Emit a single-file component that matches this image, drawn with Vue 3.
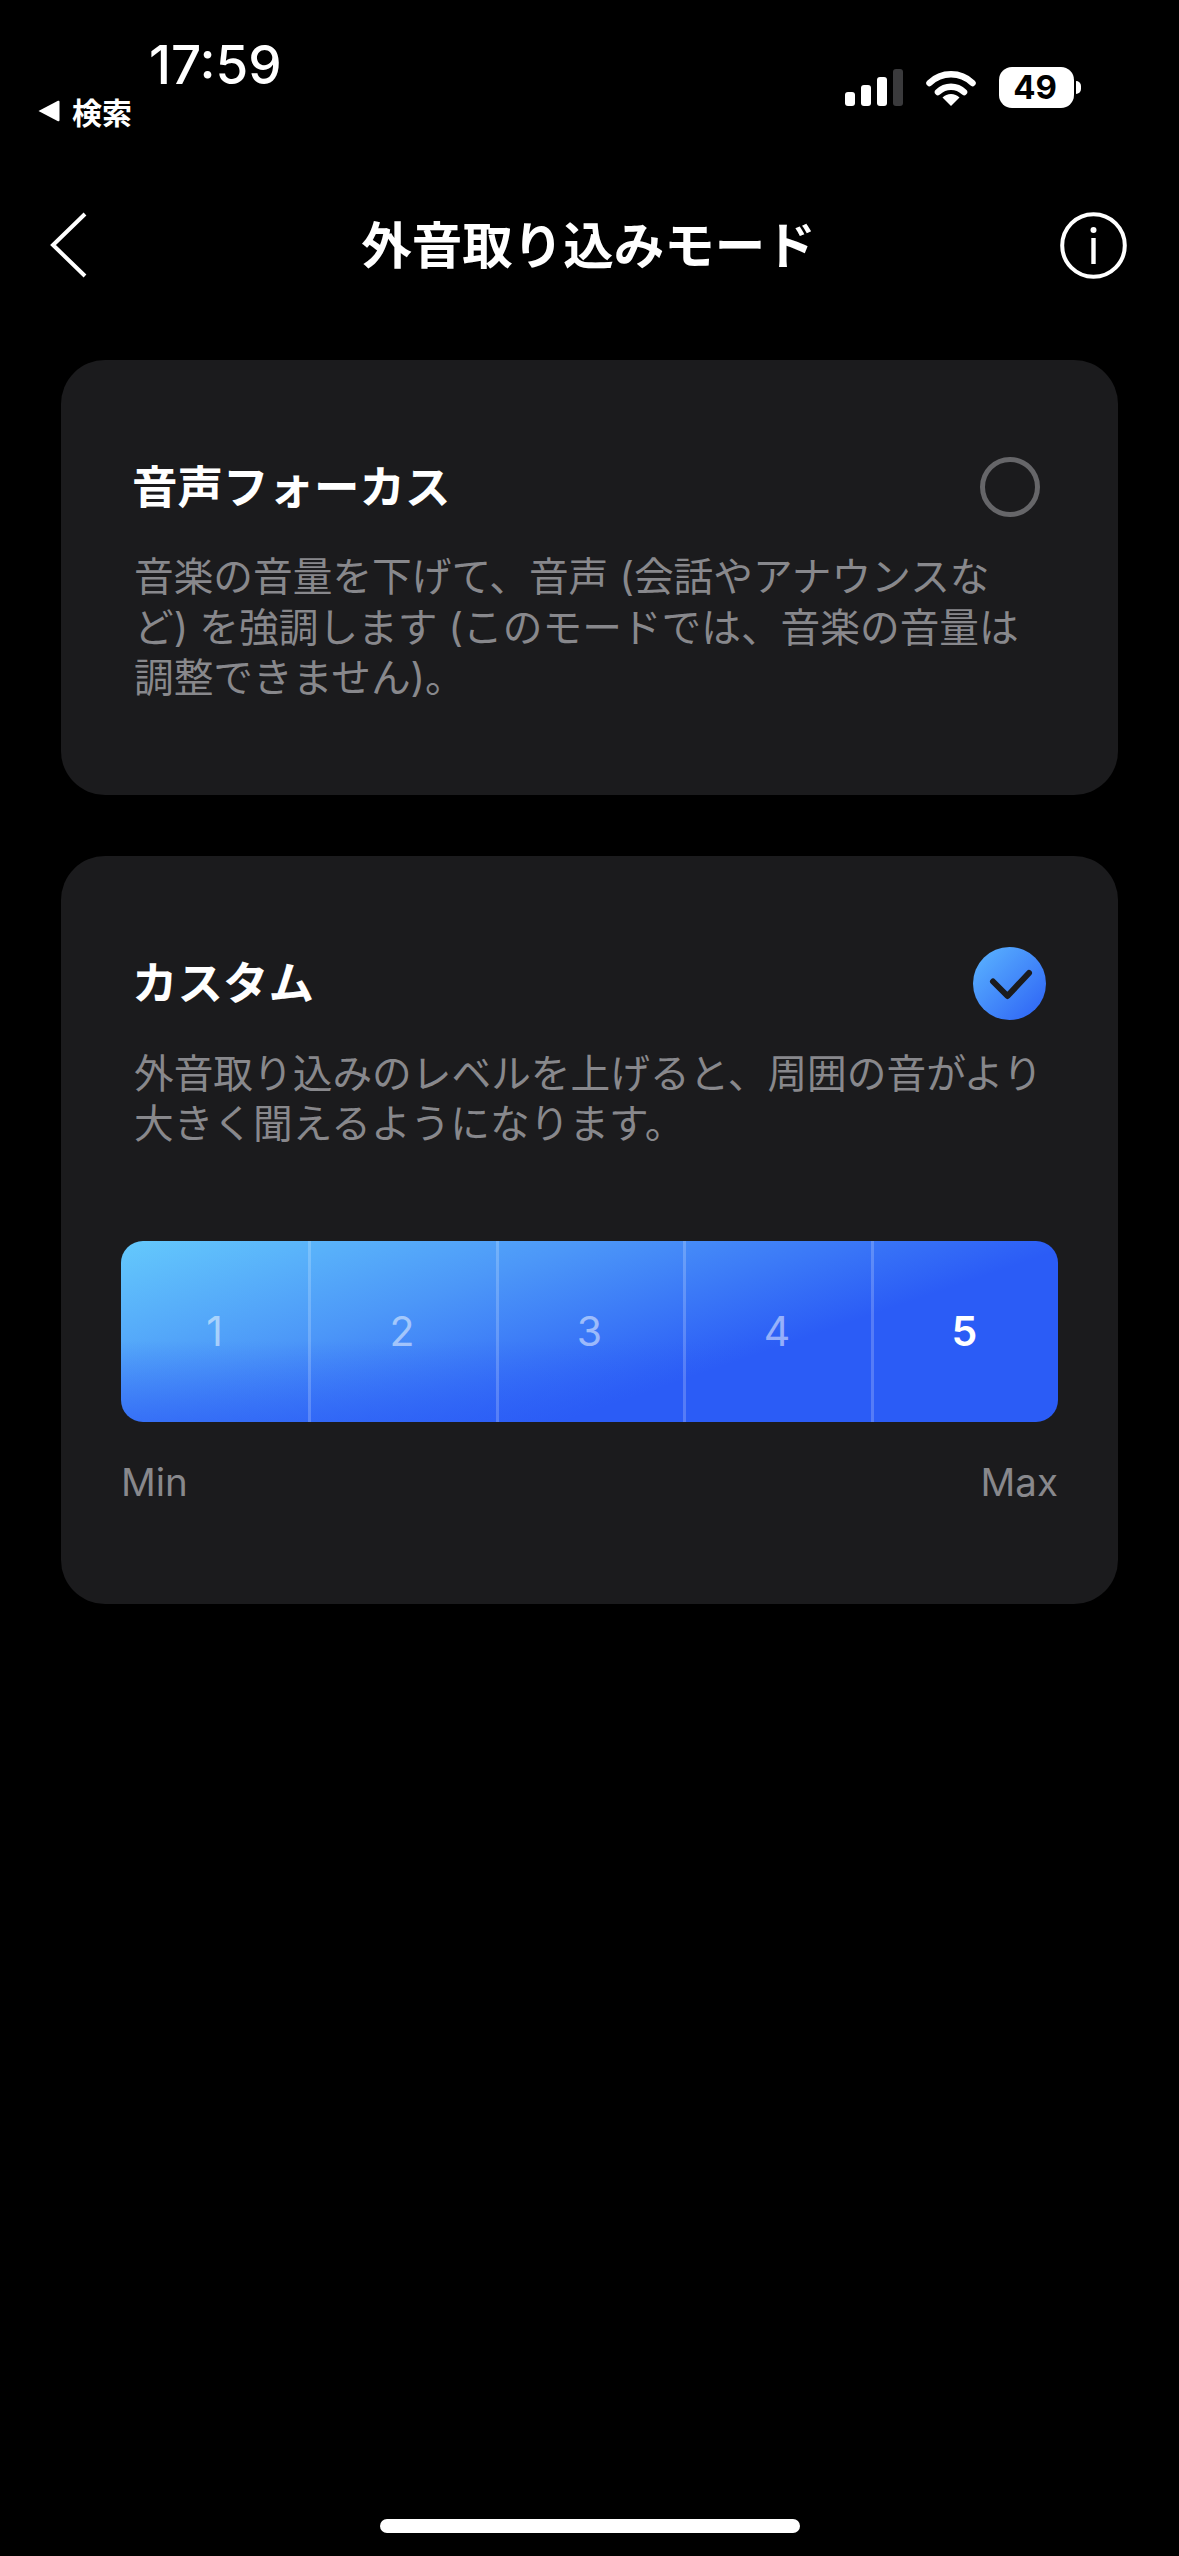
<script setup>
const levels = [1, 2, 3, 4, 5]
const activeLevel = 5
const bars = [
  { h: 14, on: true },
  { h: 21, on: true },
  { h: 29, on: true },
  { h: 37, on: false }
]
</script>

<template>
  <div class="page">
    <div class="status">
      <div class="status-left">
        <div class="time">17:59</div>
        <div class="back-app">
          <svg class="back-arrow" width="22" height="22" viewBox="0 0 22 22">
            <path d="M0.5 11 L20 0.8 Q21.5 0.2 21.5 2 L21.5 20 Q21.5 21.8 20 21.2 Z" fill="#fff" />
          </svg>
          <span>検索</span>
        </div>
      </div>
      <div class="status-right">
        <div class="signal">
          <span v-for="(b, i) in bars" :key="i" class="bar" :class="{ off: !b.on }" :style="{ height: b.h + 'px' }"></span>
        </div>
        <svg width="50" height="37" viewBox="0 0 50 37">
          <path d="M3.5 14 A 31 31 0 0 1 46.5 14" fill="none" stroke="#fff" stroke-width="6.5" stroke-linecap="round" />
          <path d="M12 23 A 19 19 0 0 1 38 23" fill="none" stroke="#fff" stroke-width="6.5" stroke-linecap="round" />
          <path d="M25 37 L16.5 28.5 A 12 12 0 0 1 33.5 28.5 Z" fill="#fff" />
        </svg>
        <div class="battery">
          <div class="battery-body">49</div>
          <div class="battery-nub"></div>
        </div>
      </div>
    </div>

    <div class="nav">
      <svg class="nav-back" width="37" height="66" viewBox="0 0 37 66">
        <path d="M35 2 L3 33 L35 64" fill="none" stroke="#fff" stroke-width="4" />
      </svg>
      <div class="nav-title">外音取り込みモード</div>
      <svg class="nav-info" width="67" height="67" viewBox="0 0 67 67">
        <circle cx="33.5" cy="33.5" r="31.3" fill="none" stroke="#fff" stroke-width="4" />
        <circle cx="33.5" cy="18" r="3" fill="#fff" />
        <rect x="31.3" y="26" width="4.4" height="26" fill="#fff" />
      </svg>
    </div>

    <div class="list">
      <div class="card">
        <div class="row">
          <div class="title">音声フォーカス</div>
          <div class="radio"></div>
        </div>
        <div class="desc first">音楽の音量を下げて、音声 (会話やアナウンスな<br>ど) を強調します (このモードでは、音楽の音量は<br>調整できません)。</div>
      </div>

      <div class="card custom">
        <div class="row row-check">
          <div class="title">カスタム</div>
          <svg class="check" width="73" height="73" viewBox="0 0 73 73">
            <defs>
              <linearGradient id="checkFill" x1="0" y1="0" x2="1" y2="1">
                <stop offset="0" stop-color="#5cb6ff" />
                <stop offset="1" stop-color="#2c60f5" />
              </linearGradient>
            </defs>
            <circle cx="36.5" cy="36.5" r="36.5" fill="url(#checkFill)" />
            <path d="M20 34.5 L34.5 49 L56 26" fill="none" stroke="#1b1b1d" stroke-width="6" stroke-linecap="round" stroke-linejoin="round" />
          </svg>
        </div>
        <div class="desc second">外音取り込みのレベルを上げると、周囲の音がより<br>大きく聞えるようになります。</div>
        <div class="slider">
          <div v-for="n in levels" :key="n" class="cell" :class="{ active: n === activeLevel }">{{ n }}</div>
        </div>
        <div class="range">
          <span>Min</span>
          <span>Max</span>
        </div>
      </div>
    </div>

    <div class="home-wrap">
      <div class="home"></div>
    </div>
  </div>
</template>

<style>
html, body {
  background: #000;
}
</style>

<style scoped>
.page {
  height: 2556px;
  background: #000;
  color: #fff;
  display: flex;
  flex-direction: column;
  font-family: Inter, "Noto Sans CJK JP", sans-serif;
  overflow: hidden;
}
.status {
  height: 195px;
  display: flex;
  justify-content: space-between;
  align-items: flex-start;
}
.status-left {
  padding: 36px 0 0 38px;
}
.time {
  margin-left: 111px;
  font-size: 53px;
  line-height: 58px;
  font-weight: 500;
}
.back-app {
  display: flex;
  align-items: center;
  gap: 12px;
  margin-top: -1px;
  font-size: 30px;
  line-height: 36px;
  font-weight: 700;
  font-family: "Noto Sans CJK JP", sans-serif;
}
.status-right {
  display: flex;
  align-items: center;
  gap: 23px;
  padding: 67px 98px 0 0;
}
.signal {
  display: flex;
  align-items: flex-end;
  gap: 6px;
  height: 37px;
}
.bar {
  width: 10px;
  border-radius: 3px;
  background: #fff;
}
.bar.off {
  background: #3a3a3c;
}
.battery {
  display: flex;
  align-items: center;
  gap: 2px;
}
.battery-body {
  width: 75px;
  height: 41px;
  padding-right: 3px;
  box-sizing: border-box;
  border-radius: 13px;
  background: #fff;
  color: #000;
  font-size: 33px;
  line-height: 41px;
  font-weight: 700;
  text-align: center;
}
.battery-nub {
  width: 5px;
  height: 13px;
  border-radius: 0 5px 5px 0;
  background: #fff;
}
.nav {
  height: 100px;
  display: grid;
  grid-template-columns: 1fr auto 1fr;
  align-items: center;
  padding: 0 52px 0 50px;
}
.nav-title {
  font-size: 50.5px;
  font-weight: 700;
  line-height: 60px;
  margin-top: -7px;
  font-family: "Noto Sans CJK JP", sans-serif;
}
.nav-info {
  justify-self: end;
}
.list {
  padding: 65px 61px 0;
  display: flex;
  flex-direction: column;
  gap: 61px;
}
.card {
  background: #1b1b1d;
  border-radius: 44px;
  padding: 97px 0 91px;
}
.card.custom {
  padding: 91px 60px 0;
  height: 748px;
  box-sizing: border-box;
}
.row {
  display: flex;
  align-items: center;
  justify-content: space-between;
  padding: 0 78px 0 71px;
}
.row-check {
  padding: 0 12px 0 11px;
}
.title {
  font-size: 45.5px;
  font-weight: 700;
  line-height: 60px;
  margin-top: -7px;
  font-family: "Noto Sans CJK JP", sans-serif;
}
.radio {
  width: 60px;
  height: 60px;
  box-sizing: border-box;
  border: 5px solid #666669;
  border-radius: 50%;
}
.desc {
  font-size: 39.7px;
  line-height: 50.5px;
  color: #88888c;
  font-family: Inter, "Noto Sans CJK JP", sans-serif;
  white-space: nowrap;
}
.desc.first {
  margin-top: 35px;
  padding-left: 73px;
}
.desc.second {
  margin-top: 29px;
  padding-left: 13px;
}
.slider {
  margin-top: 91px;
  height: 181px;
  border-radius: 22px;
  overflow: hidden;
  display: grid;
  grid-template-columns: repeat(5, 1fr);
  background:
    linear-gradient(to top, rgba(43, 92, 246, 0.6) 0%, rgba(43, 92, 246, 0) 45%),
    linear-gradient(161deg, #64c9fc 0%, #4c97f8 32%, #2b5cf6 66%, #2b5cf6 100%);
}
.cell {
  display: flex;
  align-items: center;
  justify-content: center;
  font-size: 41px;
  color: rgba(255, 255, 255, 0.5);
  box-shadow: inset 3px 0 0 rgba(255, 255, 255, 0.2);
}
.cell:first-child {
  box-shadow: none;
}
.cell.active {
  color: #fff;
  font-weight: 600;
}
.range {
  display: flex;
  justify-content: space-between;
  margin-top: 36px;
  font-size: 38.5px;
  line-height: 48px;
  color: #88888c;
}
.home-wrap {
  margin-top: auto;
  padding-bottom: 23px;
  display: flex;
  justify-content: center;
}
.home {
  width: 420px;
  height: 14px;
  border-radius: 7px;
  background: #fff;
}
</style>
